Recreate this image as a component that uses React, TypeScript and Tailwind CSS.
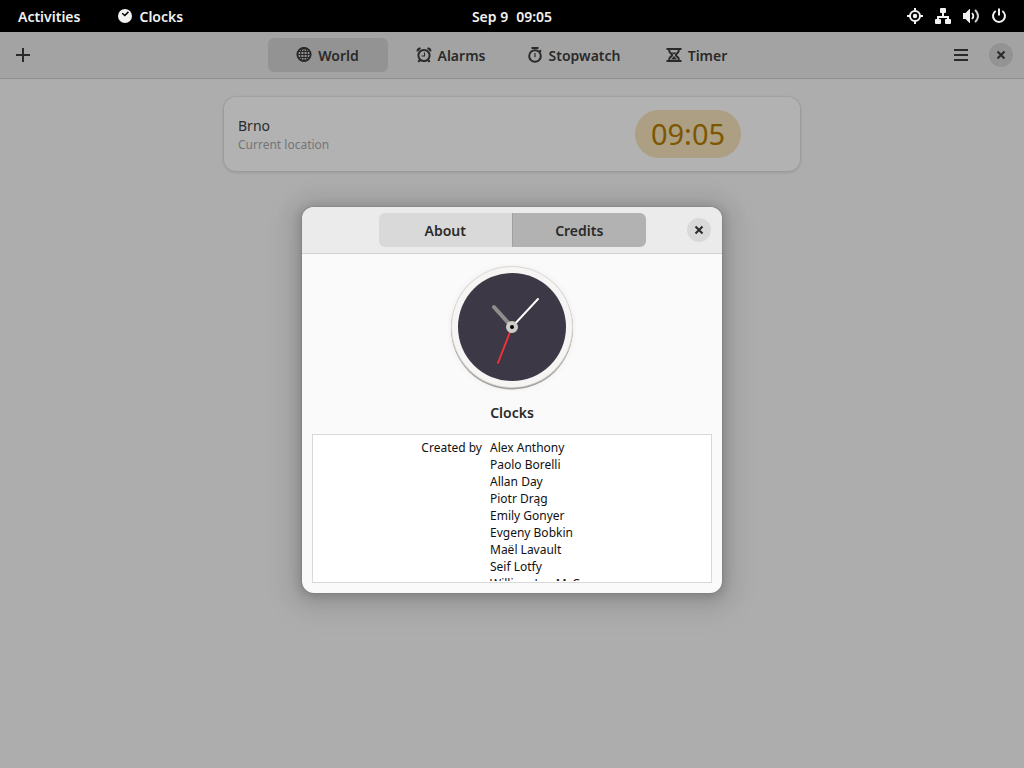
import { useState } from "react";
import type { ReactNode } from "react";

const credits = [
  "Alex Anthony",
  "Paolo Borelli",
  "Allan Day",
  "Piotr Drąg",
  "Emily Gonyer",
  "Evgeny Bobkin",
  "Maël Lavault",
  "Seif Lotfy",
  "William Jon McCann",
];

function Icon({ children }: { children: ReactNode }) {
  return (
    <svg viewBox="0 0 16 16" className="size-4 shrink-0" fill="none" stroke="currentColor" strokeWidth="2" aria-hidden="true">
      {children}
    </svg>
  );
}

function GlobeIcon() {
  return (
    <Icon>
      <circle cx="8" cy="7.500" r="6.6" strokeWidth="2" />
      <ellipse cx="8" cy="7.500" rx="3.3" ry="6.6" strokeWidth="1.2" />
      <path d="M8 1v13M1 7.500h14M2 4.500h12M2 10.500h12" strokeWidth="1.1" />
    </Icon>
  );
}

function AlarmIcon() {
  return (
    <Icon>
      <circle cx="8" cy="8.5" r="5.6" strokeWidth="2" />
      <path d="M8.5 5.5v3.500H5.5" strokeWidth="1.1" />
      <path d="M1.8 4.4c-.6-1.8.8-3.2 2.8-2.7M14.2 4.4c.6-1.8-.8-3.2-2.8-2.7M3.9 12.800l-1.500 2.200M12.1 12.800l1.500 2.200" strokeWidth="2.200" />
    </Icon>
  );
}

function StopwatchIcon() {
  return (
    <Icon>
      <circle cx="8" cy="9" r="5.8" strokeWidth="2" />
      <path d="M4.500 1h7M12 5.2l2-2" />
      <path d="M8 6v4.3" strokeWidth="1.2" />
    </Icon>
  );
}

function HourglassIcon() {
  return (
    <Icon>
      <path d="M.5 2h15M.5 14h15" />
      <path d="M3.3 2.5v1.6C3.3 6 6.200 6.6 6.200 8s-2.900 2-2.900 3.9v1.6M12.7 2.5v1.6C12.7 6 9.800 6.6 9.800 8s2.900 2 2.900 3.9v1.6" strokeWidth="2" />
      <path d="M5.500 5.500h5L8 7.500zM8 9l3 3.5H5z" fill="currentColor" stroke="none" />
    </Icon>
  );
}

function CloseIcon() {
  return (
    <Icon>
      <path d="M4.5 4.5l7 7M11.5 4.5l-7 7" />
    </Icon>
  );
}

function ClockLogo() {
  return (
    <svg viewBox="0 0 128 128" className="size-32" role="img" aria-label="Clocks logo">
      <defs>
        <filter id="halo" x="-20%" y="-20%" width="140%" height="140%">
          <feGaussianBlur stdDeviation="4" />
        </filter>
      </defs>
      <circle cx="64" cy="65" r="60" fill="#000" opacity=".07" filter="url(#halo)" />
      <circle cx="64" cy="65.500" r="61" fill="#a19f9c" />
      <circle cx="64" cy="64" r="61" fill="#d9d7d4" />
      <circle cx="64" cy="64" r="60" fill="#f6f5f4" />
      <circle cx="64" cy="64" r="54" fill="#3d3846" />
      <g strokeLinecap="round">
        <path d="M64 64L46 44" stroke="#8e8d8b" strokeWidth="4" />
        <path d="M64 65L90 37" stroke="#241f31" strokeWidth="2" opacity=".4" />
        <path d="M64 64L90 36" stroke="#fff" strokeWidth="2" />
        <path d="M64 65L50 101" stroke="#241f31" strokeWidth="2" opacity=".4" />
        <path d="M64 64L50 100" stroke="#ed333b" strokeWidth="2" />
      </g>
      <circle cx="64" cy="64" r="6" fill="#cfcdc8" />
      <circle cx="64" cy="64" r="2" fill="#000" />
    </svg>
  );
}

function TopBar() {
  return (
    <header className="grid h-8 shrink-0 grid-cols-[1fr_auto_1fr] items-center bg-black text-[#f2f2f2]">
      <div className="flex items-center gap-[37px] pl-[18px]">
        <button type="button">Activities</button>
        <button type="button" className="flex items-center gap-1.5">
          <Icon>
            <circle cx="8" cy="8" r="7" fill="currentColor" stroke="none" />
            <path d="M5.2 5.3L7.8 7.500l3.6-3.6" stroke="#000" strokeWidth="1.5" />
          </Icon>
          Clocks
        </button>
      </div>
      <button type="button" className="flex gap-2">
        <span>Sep 9</span>
        <span>09:05</span>
      </button>
      <button type="button" aria-label="System menu" className="flex items-center gap-3 justify-self-end pr-[17px]">
        <Icon>
          <circle cx="8" cy="8" r="5" />
          <circle cx="8" cy="8" r="2.2" fill="currentColor" stroke="none" />
          <path d="M8 0v3M8 13v3M0 8h3M13 8h3" />
        </Icon>
        <Icon>
          <g fill="currentColor" stroke="none">
            <rect x="5" y="0" width="6" height="5" rx="1" />
            <rect x="0" y="11" width="6" height="5" rx="1" />
            <rect x="10" y="11" width="6" height="5" rx="1" />
          </g>
          <path d="M8 4v5M3 12V9h10v3" />
        </Icon>
        <Icon>
          <path d="M0 5h2.500L6.500 1H7v14h-.500L2.500 11H0z" fill="currentColor" stroke="none" />
          <path d="M9 5c1.600 1.800 1.600 4.200 0 6" strokeWidth="1.800" />
          <path d="M12 2c4 3.500 4 8.500 0 12" opacity=".85" />
        </Icon>
        <Icon>
          <path d="M4.700 3a6 6 0 1 0 6.600 0" />
          <path d="M8 .5v7" />
        </Icon>
      </button>
    </header>
  );
}

const views = [
  { name: "World", icon: <GlobeIcon /> },
  { name: "Alarms", icon: <AlarmIcon /> },
  { name: "Stopwatch", icon: <StopwatchIcon /> },
  { name: "Timer", icon: <HourglassIcon /> },
];

function AboutDialog({ onClose }: { onClose: () => void }) {
  const [page, setPage] = useState("Credits");
  return (
    <section
      role="dialog"
      aria-label="About Clocks"
      className="w-[420px] overflow-hidden rounded-xl bg-[#fafafa] shadow-[0_0_0_1px_rgba(0,0,0,0.05),0_2px_8px_2px_rgba(0,0,0,0.14),0_3px_20px_10px_rgba(0,0,0,0.09),0_6px_32px_16px_rgba(0,0,0,0.04)]"
    >
      <div className="grid h-[47px] grid-cols-[1fr_267px_1fr] items-center border-b border-[#cfcfcf] bg-[#ebebeb]">
        <div className="col-start-2 grid h-[34px] grid-cols-2 overflow-hidden rounded-md">
          {["About", "Credits"].map((name) => (
            <button
              key={name}
              type="button"
              aria-pressed={page === name}
              onClick={() => setPage(name)}
              className={name === page ? "border-l border-[#a0a0a0] bg-[#b2b2b2]" : "bg-[#d9d9d9]"}
            >
              {name}
            </button>
          ))}
        </div>
        <button
          type="button"
          aria-label="Close dialog"
          onClick={onClose}
          className="mr-[11px] grid size-6 place-items-center justify-self-end rounded-full bg-[#d9d9d9]"
        >
          <CloseIcon />
        </button>
      </div>
      <div className="flex flex-col items-center px-2.5 pt-[9px] pb-2.5">
        <ClockLogo />
        <h1 className="mt-3 mb-[11px] leading-5">Clocks</h1>
        <div className="h-[149px] w-full border border-[#d9d9d9] bg-white pb-px text-[12px] leading-[17px] font-normal text-[#111]">
          <div className="grid h-full grid-cols-[169px_1fr] gap-2 overflow-hidden pt-1">
            {page === "Credits" && (
              <>
                <h2 className="text-right">Created by</h2>
                <ul>
                  {credits.map((name) => (
                    <li key={name}>{name}</li>
                  ))}
                </ul>
              </>
            )}
          </div>
        </div>
      </div>
    </section>
  );
}

export default function App() {
  const [view, setView] = useState("World");
  const [open, setOpen] = useState(true);
  return (
    <div className="flex min-h-screen flex-col bg-[#adadad] font-['Noto_Sans','Open_Sans',sans-serif] text-[14px] font-semibold text-[#2a2a2a]">
      <TopBar />
      <div className="relative flex grow flex-col">
        <div className="grid h-[47px] grid-cols-[1fr_auto_1fr] items-center border-b border-[#8f8f8f] bg-[#a3a3a3]">
          <button type="button" aria-label="Add location" className="ml-[15px] justify-self-start">
            <Icon>
              <path d="M8 1v14M1 8h14" />
            </Icon>
          </button>
          <nav className="flex gap-[3px]">
            {views.map(({ name, icon }) => (
              <button
                key={name}
                type="button"
                aria-pressed={view === name}
                onClick={() => setView(name)}
                className={`flex h-[34px] w-[120px] items-center justify-center gap-1.5 rounded-md ${view === name ? "bg-[#939393]" : ""}`}
              >
                {icon}
                {name}
              </button>
            ))}
          </nav>
          <div className="mr-[11px] flex items-center gap-5 justify-self-end">
            <button type="button" aria-label="Main menu">
              <Icon>
                <path d="M1 3h14M1 8h14M1 13h14" />
              </Icon>
            </button>
            <button type="button" aria-label="Close window" className="grid size-6 place-items-center rounded-full bg-[#939393]">
              <CloseIcon />
            </button>
          </div>
        </div>
        <main className="flex justify-center px-6 pt-[18px]">
          <article className="flex h-[74px] w-full max-w-[576px] items-center justify-between rounded-xl bg-[#b2b2b2] pr-[59px] pl-3.5 font-normal shadow-[0_0_0_1px_rgba(0,0,0,0.04),0_1px_3px_1px_rgba(0,0,0,0.09)]">
            <div className="pt-0.5">
              <h2 className="leading-5">Brno</h2>
              <p className="text-[12px] leading-[18px] text-[#757575]">Current location</p>
            </div>
            <time className="grid h-12 w-[106px] place-items-center rounded-full bg-[#ac9f84] pb-0.5 text-[29px] leading-none text-[#7d5600]">
              09:05
            </time>
          </article>
        </main>
        {open && (
          <div className="absolute inset-0 flex items-center justify-center">
            <AboutDialog onClose={() => setOpen(false)} />
          </div>
        )}
      </div>
    </div>
  );
}
